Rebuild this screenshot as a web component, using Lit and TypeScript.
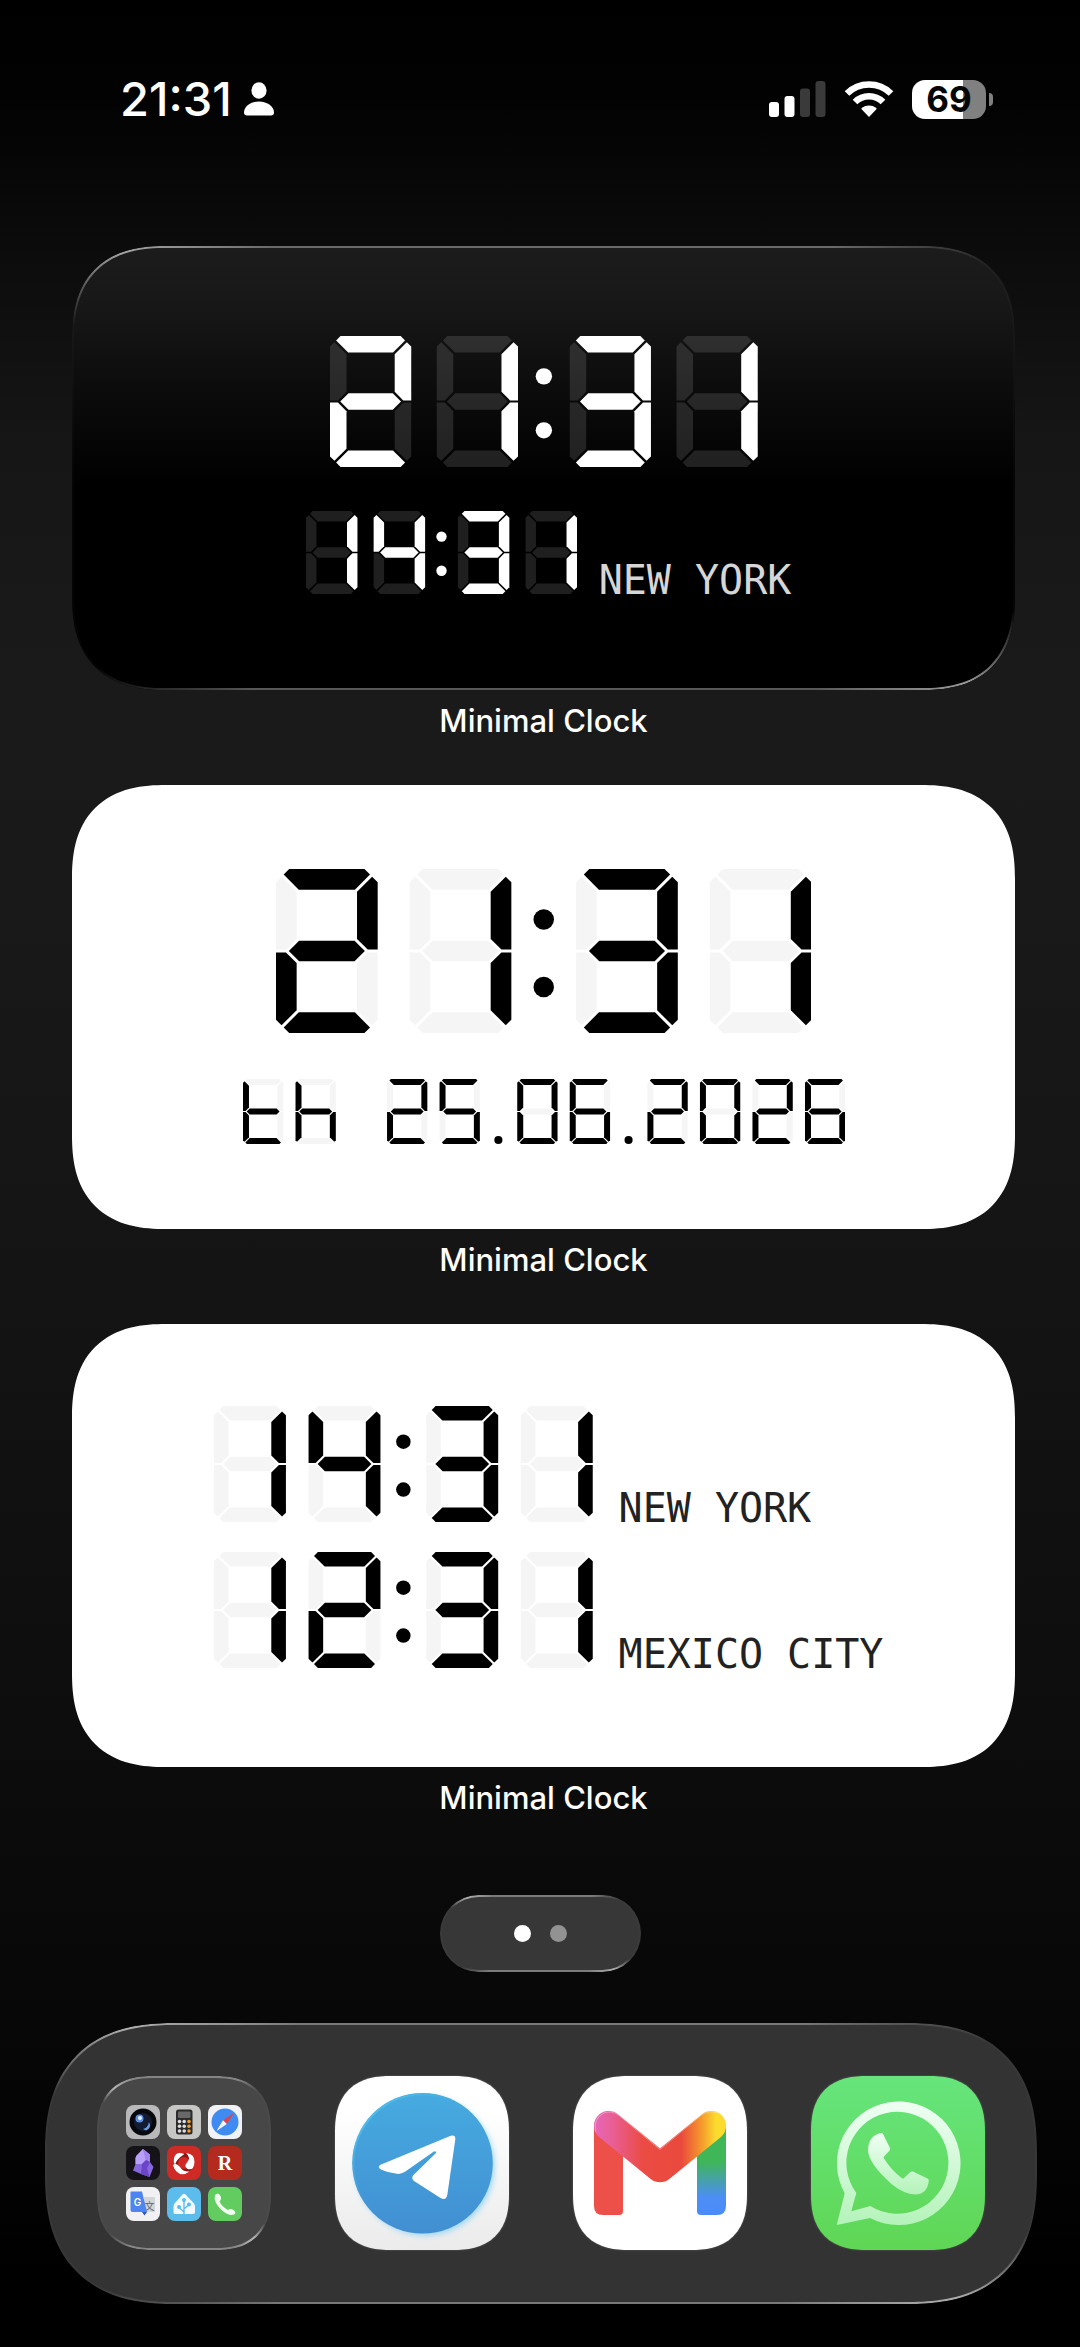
import { LitElement, html, svg, css, TemplateResult } from 'lit';
import { customElement, property } from 'lit/decorators.js';
import { classMap } from 'lit/directives/class-map.js';

// Lit segments per character, in the usual a-g naming.
const SEGMENTS: Record<string, string> = {
  '0': 'abcdef',
  '1': 'bc',
  '2': 'abdeg',
  '3': 'abcdg',
  '4': 'bcfg',
  '5': 'acdfg',
  '6': 'acdefg',
  '7': 'abc',
  '8': 'abcdefg',
  '9': 'abcdfg',
  t: 'defg',
  h: 'cefg',
};

type Point = [number, number];

@customElement('segment-display')
export class SegmentDisplay extends LitElement {
  @property()
  value: string = '';

  @property({ type: Number })
  size: number = 100;

  @property({ type: Boolean })
  thin: boolean = false;

  static styles = css`
    :host {
      display: flex;
    }
    svg {
      display: block;
    }
    .on {
      fill: var(--segment-on, #000);
    }
    .off {
      fill: var(--segment-off, #f5f5f5);
    }
  `;

  private segment_points = (w: number, h: number): Record<string, Point[]> => {
    const t = h * (this.thin ? 0.092 : 0.126);
    const c = t * 0.64;
    const a = t * 0.62;
    const e = h * 0.013;
    const g = h * 0.0085;
    const m = h / 2;
    const top: Point[] = [
      [c, 0],
      [w - c, 0],
      [w - (c + e) / 2, (c - e) / 2],
      [w - t - e, t],
      [t + e, t],
      [(c + e) / 2, (c - e) / 2],
    ];
    const left: Point[] = [
      [0, c],
      [(c - e) / 2, (c + e) / 2],
      [t, t + e],
      [t, a + m - 2 * e - t],
      [a - 2 * e + g, m - g],
      [0, m - g],
    ];
    const flip_x = (points: Point[]) => points.map(([x, y]): Point => [w - x, y]);
    const flip_y = (points: Point[]) => points.map(([x, y]): Point => [x, h - y]);
    return {
      a: top,
      b: flip_x(left),
      c: flip_y(flip_x(left)),
      d: flip_y(top),
      e: flip_y(left),
      f: left,
      g: [
        [a, m],
        [a + t / 2, m - t / 2],
        [w - a - t / 2, m - t / 2],
        [w - a, m],
        [w - a - t / 2, m + t / 2],
        [a + t / 2, m + t / 2],
      ],
    };
  };

  render() {
    const h = this.size;
    const w = h * 0.62;
    const gap = h * (this.thin ? 0.188 : 0.195);
    const radius = h * 0.0625;
    const segments = this.segment_points(w, h);
    const shapes: TemplateResult[] = [];
    let x = 0;
    for (const char of this.value) {
      if (char === ' ') {
        x += h * 0.6;
      } else if (char === ':') {
        x += h * 0.395 - gap;
        const cx = x - (h * 0.395) / 2;
        shapes.push(svg`
          <circle class="on" cx=${cx} cy=${h * 0.308} r=${radius}></circle>
          <circle class="on" cx=${cx} cy=${h * 0.72} r=${radius}></circle>
        `);
      } else if (char === '.') {
        x += h * 0.575 - gap;
        shapes.push(svg`
          <circle class="on" cx=${x - h * 0.29} cy=${h - radius} r=${radius}></circle>
        `);
      } else {
        const lit = SEGMENTS[char] ?? '';
        const offset = x;
        for (const [name, points] of Object.entries(segments)) {
          shapes.push(svg`
            <polygon
              class=${lit.includes(name) ? 'on' : 'off'}
              points=${points.map(([px, py]) => `${(px + offset).toFixed(2)},${py.toFixed(2)}`).join(' ')}
            ></polygon>
          `);
        }
        x += w + gap;
      }
    }
    const width = Math.round(x - gap);
    return html`
      <svg
        role="img"
        aria-label=${this.value}
        width=${width}
        height=${h}
        viewBox="0 0 ${width} ${h}"
      >
        ${shapes}
      </svg>
    `;
  }
}

@customElement('status-bar')
export class StatusBar extends LitElement {
  @property()
  time: string = '';

  @property({ type: Number })
  battery: number = 0;

  static styles = css`
    :host {
      display: flex;
      align-items: center;
      justify-content: space-between;
      padding: 75px 87px 123px 120px;
      font-family: Inter, 'Liberation Sans', sans-serif;
      color: #fff;
    }
    .group {
      display: flex;
      align-items: center;
      height: 48px;
      gap: 18px;
    }
    .group.left {
      gap: 12px;
    }
    .time {
      font-size: 47px;
      font-weight: 500;
      line-height: 48px;
    }
    svg {
      display: block;
    }
    .battery {
      position: relative;
      width: 74px;
      height: 39px;
      margin-right: 7px;
      border-radius: 13px;
      color: #050505;
      font-size: 35px;
      font-weight: 700;
      line-height: 39px;
      text-align: center;
    }
    .battery::after {
      content: '';
      position: absolute;
      top: 13px;
      right: -7px;
      width: 4px;
      height: 13px;
      border-radius: 0 4px 4px 0;
      background: #808080;
    }
  `;

  render() {
    return html`
      <div class="group left">
        <span class="time">${this.time}</span>
        <svg width="30" height="34" viewBox="0 0 30 34" fill="#fff" aria-hidden="true">
          <ellipse cx="15" cy="8.5" rx="7.6" ry="8.3"></ellipse>
          <path d="M3 33.5C1 33.5 0 32.300 0 30.500C0 24.500 6.500 19.500 15 19.500S30 24.500 30 30.500C30 32.300 29 33.500 27 33.500Z"></path>
        </svg>
      </div>
      <div class="group">
        <svg width="57" height="36" viewBox="0 0 57 36" aria-hidden="true">
          <rect x="0" y="21" width="10" height="15" rx="3" fill="#fff"></rect>
          <rect x="15.500" y="15" width="10" height="21" rx="3" fill="#fff"></rect>
          <rect x="31" y="7.500" width="10" height="28.500" rx="3" fill="#3a3a3a"></rect>
          <rect x="46.500" y="0" width="10" height="36" rx="3" fill="#3a3a3a"></rect>
        </svg>
        <svg width="50" height="36" viewBox="0 0 50 36" aria-hidden="true">
          <g fill="none" stroke="#fff" stroke-width="6.600">
            <path d="M3 12.500A31.500 31.500 0 0 1 47 12.500"></path>
            <path d="M11 21A20 20 0 0 1 39 21"></path>
          </g>
          <path fill="#fff" d="M25 36L17.600 28.300Q17 27.500 18 26.800A11.500 11.500 0 0 1 32 26.800Q33 27.500 32.400 28.300Z"></path>
        </svg>
        <div
          class="battery"
          style="background: linear-gradient(90deg, #fff ${this.battery}%, #808080 ${this.battery}%)"
        >
          ${this.battery}
        </div>
      </div>
    `;
  }
}

const telegram_icon = svg`
  <defs>
    <linearGradient id="plate" x1="0" y1="0" x2="0" y2="1">
      <stop offset=".2" stop-color="#fff"></stop>
      <stop offset="1" stop-color="#ebebeb"></stop>
    </linearGradient>
    <linearGradient id="sky" x1="0" y1="0" x2="0" y2="1">
      <stop offset="0" stop-color="#46abe0"></stop>
      <stop offset="1" stop-color="#428fd2"></stop>
    </linearGradient>
    <linearGradient id="sky-rim" x1="0" y1="0" x2="1" y2="1">
      <stop offset="0" stop-color="#55d4fa"></stop>
      <stop offset=".45" stop-color="#46abe0" stop-opacity="0"></stop>
    </linearGradient>
    <filter id="glow" x="-20%" y="-20%" width="140%" height="140%">
      <feGaussianBlur stdDeviation="3"></feGaussianBlur>
    </filter>
  </defs>
  <rect width="174" height="174" fill="url(#plate)"></rect>
  <circle cx="90" cy="90" r="69" fill="#8fd3f5" filter="url(#glow)"></circle>
  <circle cx="87.500" cy="87.300" r="70.300" fill="url(#sky)"></circle>
  <circle cx="87.500" cy="87.300" r="69" fill="none" stroke="url(#sky-rim)" stroke-width="1.800"></circle>
  <path
    fill="#fff"
    d="M45.500 88.700L115.800 59.700Q120.800 58.300 120.300 63.500L112.300 119Q111 125 105.500 122L79 105Q76 102.500 78.200 99.300L101 77Q101.500 74.500 98.500 75.800L70 95.800Q66 98.300 62 97.800Q53 97 46.500 93.800Q41.500 91 45.500 88.700Z"
  ></path>
`;

const gmail_icon = svg`
  <defs>
    <linearGradient id="green" x1="0" y1="0" x2="0" y2="1">
      <stop offset=".4" stop-color="#3fb658"></stop>
      <stop offset=".8" stop-color="#4c8ef5"></stop>
      <stop offset="1" stop-color="#4b8bfa"></stop>
    </linearGradient>
    <linearGradient id="fold" gradientUnits="userSpaceOnUse" x1="24" y1="0" x2="152" y2="0">
      <stop offset="0" stop-color="#e765b4"></stop>
      <stop offset=".12" stop-color="#e95f95"></stop>
      <stop offset=".36" stop-color="#ea4b43"></stop>
      <stop offset=".66" stop-color="#ea4a3d"></stop>
      <stop offset=".82" stop-color="#f59b2c"></stop>
      <stop offset=".93" stop-color="#fadb2e"></stop>
    </linearGradient>
  </defs>
  <rect width="174" height="174" fill="#fff"></rect>
  <path fill="#ec5048" d="M21 50H50V135Q50 139 46 139H30Q21 139 21 130Z"></path>
  <path fill="url(#green)" d="M124 50H153V130Q153 139 144 139H128Q124 139 124 135Z"></path>
  <path
    fill="none"
    stroke="url(#fold)"
    stroke-width="29.500"
    stroke-linecap="round"
    stroke-linejoin="round"
    d="M35.700 49.700L87 91.500L138.300 49.700"
  ></path>
  <path fill="none" stroke="#fff" stroke-opacity=".35" d="M22.500 56Q20 42 31 37Q39 34 46 39.500L87 73.500L128 39.500Q136 33.500 144 37"></path>
`;

const whatsapp_icon = svg`
  <defs>
    <linearGradient id="leaf" x1="0" y1="0" x2="0" y2="1">
      <stop offset="0" stop-color="#66e57c"></stop>
      <stop offset="1" stop-color="#5fd655"></stop>
    </linearGradient>
    <linearGradient id="mint" x1="0" y1="0" x2="0" y2="1">
      <stop offset="0" stop-color="#f0fff4"></stop>
      <stop offset="1" stop-color="#b4f3ba"></stop>
    </linearGradient>
  </defs>
  <rect width="174" height="174" fill="url(#leaf)"></rect>
  <path
    fill="url(#mint)"
    fill-rule="evenodd"
    d="M25.700 149L33.700 117.300A61.800 61.800 0 1 1 59 142ZM40.300 135.300L59.300 130A51 51 0 1 0 45.300 117Z"
  ></path>
  <path
    fill="url(#mint)"
    d="M70 57Q71.300 56.500 72 58L79 72Q79.600 73.400 78.600 74.500L73 80.500Q72.300 81.400 73 82.500Q80 94 91 102.200Q92 103 93 102L99.300 96Q100.400 95 102 95.600L116.500 102.500Q118.200 103.500 117.800 105Q116 118.500 104 118.500Q93 118 81 108.500Q57 87 57 74Q57.500 59.500 70 57Z"
  ></path>
`;

const mini_icons = [
  {
    name: 'Camera',
    color: '#b9b9bb',
    art: svg`
      <circle cx="17" cy="17" r="13.500" fill="#08090d"></circle>
      <circle cx="17" cy="17" r="9" fill="#131c33"></circle>
      <circle cx="13.500" cy="13.500" r="4" fill="#5d8ee0"></circle>
      <circle cx="14" cy="13" r="2" fill="#eaf2ff"></circle>
      <path d="M17 24Q22 23 23 17Q26 23 20 25.500Z" fill="#6a9fe8"></path>
    `,
  },
  {
    name: 'Calculator',
    color: '#c6c6c4',
    art: svg`
      <rect x="9" y="4.500" width="16.500" height="25" rx="2.500" fill="#2b2b2b"></rect>
      <rect x="11" y="6.500" width="12.500" height="6.500" rx="1" fill="#686868"></rect>
      ${[16.5, 21.3, 26].map(
        (y) => svg`
          <circle cx="12.500" cy=${y} r="1.800" fill="#ddd"></circle>
          <circle cx="17.200" cy=${y} r="1.800" fill="#ddd"></circle>
          <circle cx="22" cy=${y} r="1.800" fill="#f39a2b"></circle>
        `
      )}
    `,
  },
  {
    name: 'Safari',
    color: '#f1f2f6',
    art: svg`
      <circle cx="17" cy="17" r="13.500" fill="#3f8bf2"></circle>
      <path d="M26 8L18.800 19L15 15.200Z" fill="#e0434a"></path>
      <path d="M8.500 26L18.800 19L15 15.200Z" fill="#f4f6fa"></path>
    `,
  },
  {
    name: 'Obsidian',
    color: '#151318',
    art: svg`
      <path d="M17 3L24 8.500L24 16L27.500 21L23.500 31L15 28L7 24.500L9.500 18L9 12Z" fill="#8667dd"></path>
      <path d="M17 3L20 14L16 18L9.500 18L10 10Z" fill="#b9a0f8"></path>
      <path d="M17 3L24 8.500L24 16L20 14Z" fill="#9f83ee"></path>
      <path d="M16 18L20 14L24 16L21 22L23.500 31L15 28Z" fill="#6a45c8"></path>
    `,
  },
  {
    name: 'Recorder',
    color: '#cf2a25',
    art: svg`
      <circle cx="17" cy="17" r="8" fill="none" stroke="#8f1414" stroke-width="4"></circle>
      <path d="M17.500 8Q9 4.500 7 12Q6 16 8 19Q9 13.500 17.500 8Z" fill="#fff"></path>
      <path d="M19 7Q28 8 27.500 16Q27 25 20.500 23Q16.500 20 20 16.500Q24.500 12 19 7Z" fill="#fff"></path>
      <path d="M6 19Q9.500 16.500 13 21Q16 26 22.500 25.500Q15 31 9.500 25.500Q7 23 6 19Z" fill="#fff"></path>
    `,
  },
  {
    name: 'Reader',
    color: '#b32a1e',
    art: svg`
      <text class="serif" x="17" y="23.500" font-size="20" text-anchor="middle" fill="#fff">R</text>
    `,
  },
  {
    name: 'Translate',
    color: '#f1f1f3',
    art: svg`
      <path d="M18 10H28Q29 10 29 11V24Q29 25 28 25H18Z" fill="#d3d5d8"></path>
      <text class="cjk" x="23.500" y="23" font-size="10" text-anchor="middle" fill="#5c6470">文</text>
      <path d="M5 4.500H16L21 25H6.500Q4.500 25 4.500 23V5Z" fill="#4d84ee"></path>
      <path d="M16 25H21L18.500 28.500Z" fill="#2f57b8"></path>
      <text class="sans" x="11.500" y="18.500" font-size="10" text-anchor="middle" fill="#fff">G</text>
    `,
  },
  {
    name: 'Home',
    color: '#5cbdec',
    art: svg`
      <path d="M15.500 7.500Q17 6.200 18.500 7.500L27 16.500Q28 18 28 20V25Q28 27 26 27H8Q6.500 27 6.500 25V20Q6.500 18 7.500 16.500Z" fill="#f2fbff"></path>
      <g stroke="#5cbdec" stroke-width="1.400" fill="none">
        <path d="M17 27V13M17 25L12 20.500M17 22L22 17.500"></path>
      </g>
      <g fill="#5cbdec">
        <circle cx="17" cy="13" r="2"></circle>
        <circle cx="12" cy="20" r="2"></circle>
        <circle cx="22" cy="17.500" r="2"></circle>
      </g>
    `,
  },
  {
    name: 'Phone',
    color: '#62cc60',
    art: svg`
      <path d="M7 8Q10.500 4.500 12.500 9Q14 12 11.500 14.500Q14 20 20 23Q22.500 21 25.500 23Q29 26 26 27.500Q21 29.500 13.500 23Q5 15 7 8Z" fill="#f1fff0"></path>
    `,
  },
];

interface ClockRow {
  value: string;
  size: number;
  label?: string;
  thin?: boolean;
}

interface ClockWidget {
  style: string;
  rows: ClockRow[];
}

const widgets: ClockWidget[] = [
  {
    style: 'dark',
    rows: [
      { value: '21:31', size: 131 },
      { value: '14:31', size: 83, label: 'NEW YORK' },
    ],
  },
  {
    style: 'date',
    rows: [
      { value: '21:31', size: 164 },
      { value: 'th 25.06.2026', size: 65, thin: true },
    ],
  },
  {
    style: 'zones',
    rows: [
      { value: '14:31', size: 116, label: 'NEW YORK' },
      { value: '12:31', size: 116, label: 'MEXICO CITY' },
    ],
  },
];

const apps = [
  { name: 'Telegram', art: telegram_icon },
  { name: 'Gmail', art: gmail_icon },
  { name: 'WhatsApp', art: whatsapp_icon },
];

@customElement('app-root')
export class AppRoot extends LitElement {
  static styles = css`
    * {
      box-sizing: border-box;
    }
    :host {
      display: flex;
      flex-direction: column;
      min-height: 100vh;
      padding-bottom: 42px;
      box-sizing: border-box;
      color: #fff;
      font-family: Inter, 'Liberation Sans', sans-serif;
      background: linear-gradient(
        #000 0%,
        #020202 4%,
        #0c0c0c 11%,
        #161616 19%,
        #1a1a1a 29%,
        #191919 38%,
        #141414 55%,
        #0c0c0c 76%,
        #060606 88%,
        #000 97%
      );
    }
    button {
      padding: 0;
      border: 0;
      background: none;
      font: inherit;
      color: inherit;
    }
    main {
      display: flex;
      flex-direction: column;
      gap: 46px;
      padding: 0 65px 0 72px;
    }
    figure {
      margin: 0;
    }
    figcaption {
      margin-top: 13px;
      font-size: 31px;
      font-weight: 500;
      line-height: 36px;
      text-align: center;
    }
    .widget {
      display: grid;
      align-content: center;
      justify-content: center;
      justify-items: center;
      aspect-ratio: 17 / 8;
      border-radius: 80px;
      background: #fff;
      color: #222;
    }
    .row {
      display: flex;
      align-items: baseline;
      gap: 26px;
    }
    .row.labelled {
      padding-left: 10px;
    }
    .label {
      font-family: 'DejaVu Sans Mono', monospace;
      font-size: 40px;
      line-height: 48px;
    }
    .dark {
      gap: 44px;
      padding-top: 4px;
      background: linear-gradient(#1c1c1c, #181818 12%, #0c0c0c 32%, #000 54%);
      color: #d6d6d6;
      --segment-on: #fff;
      --segment-off: rgba(255, 255, 255, 0.12);
      --corner: 65deg;
    }
    .dark .row {
      gap: 22px;
    }
    .date {
      gap: 46px;
    }
    .zones {
      gap: 20px;
      padding-bottom: 6px;
      justify-items: start;
    }

    /* Thin light edge, brightest in the top left and bottom right corners. */
    .glass {
      position: relative;
    }
    .glass::before {
      content: '';
      position: absolute;
      inset: 0;
      padding: 2px;
      border-radius: inherit;
      pointer-events: none;
      background: conic-gradient(
        rgba(255, 255, 255, 0.34) 0deg calc(var(--corner) - 12deg),
        rgba(255, 255, 255, 0.02) calc(var(--corner) + 1deg) calc(172deg - var(--corner)),
        rgba(255, 255, 255, 0.6) calc(182deg - var(--corner)),
        rgba(255, 255, 255, 0.34) calc(194deg - var(--corner)) calc(168deg + var(--corner)),
        rgba(255, 255, 255, 0.02) calc(181deg + var(--corner)) calc(352deg - var(--corner)),
        rgba(255, 255, 255, 0.6) calc(362deg - var(--corner)),
        rgba(255, 255, 255, 0.34) calc(374deg - var(--corner)) 360deg
      );
      mask:
        linear-gradient(#000 0 0) content-box exclude,
        linear-gradient(#000 0 0);
    }

    .pages {
      display: flex;
      align-self: center;
      align-items: center;
      gap: 19px;
      margin: 79px 0 51px;
      padding: 30px 74px;
      border-radius: 39px;
      background: #373737;
      --corner: 66deg;
    }
    .page {
      width: 17px;
      height: 17px;
      border-radius: 50%;
      background: #929292;
    }
    .page.current {
      background: #fff;
    }

    .dock {
      display: flex;
      justify-content: space-between;
      margin: 0 43px 0 45px;
      padding: 53px 52px 54px;
      border-radius: 112px;
      background: #333;
      --corner: 74deg;
    }
    .app {
      width: 174px;
      height: 174px;
      border-radius: 47px;
      overflow: hidden;
      box-shadow: 0 0 2px rgba(255, 255, 255, 0.25);
    }
    .app svg,
    .mini svg {
      display: block;
    }
    .folder {
      display: grid;
      grid-template-columns: repeat(3, 34px);
      place-content: center;
      gap: 7px;
      width: 174px;
      height: 174px;
      border-radius: 47px;
      background: #474747;
      --corner: 45deg;
    }
    .mini {
      border-radius: 8px;
      overflow: hidden;
    }

    @supports (corner-shape: superellipse(1.3)) {
      .widget,
      .widget::before,
      .dock,
      .dock::before,
      .folder,
      .folder::before,
      .app {
        corner-shape: superellipse(1.3);
      }
      .widget {
        border-radius: 94px;
      }
      .dock {
        border-radius: 130px;
      }
      .app,
      .folder {
        border-radius: 56px;
      }
    }

    .serif {
      font-family: 'Liberation Serif', serif;
      font-weight: 700;
    }
    .sans {
      font-family: Inter, sans-serif;
      font-weight: 600;
    }
    .cjk {
      font-family: 'Noto Sans CJK SC', sans-serif;
    }
  `;

  private render_row = (row: ClockRow) => html`
    <div class="row ${classMap({ labelled: !!row.label })}">
      <segment-display
        .value=${row.value}
        .size=${row.size}
        .thin=${row.thin ?? false}
      ></segment-display>
      ${row.label ? html`<span class="label">${row.label}</span>` : ''}
    </div>
  `;

  private render_widget = (widget: ClockWidget) => html`
    <figure>
      <div class="widget ${classMap({ [widget.style]: true, glass: widget.style === 'dark' })}">
        ${widget.rows.map(this.render_row)}
      </div>
      <figcaption>Minimal Clock</figcaption>
    </figure>
  `;

  render() {
    return html`
      <status-bar time="21:31" battery="69"></status-bar>
      <main>${widgets.map(this.render_widget)}</main>
      <nav class="pages glass" aria-label="Pages">
        <button class="page current" aria-label="Page 1"></button>
        <button class="page" aria-label="Page 2"></button>
      </nav>
      <footer class="dock glass">
        <button class="folder glass" aria-label="Folder">
          ${mini_icons.map(
            (icon) => html`
              <span class="mini">
                <svg width="34" height="34" viewBox="0 0 34 34" role="img" aria-label=${icon.name}>
                  <rect width="34" height="34" fill=${icon.color}></rect>
                  ${icon.art}
                </svg>
              </span>
            `
          )}
        </button>
        ${apps.map(
          (app) => html`
            <button class="app" aria-label=${app.name}>
              <svg width="174" height="174" viewBox="0 0 174 174" aria-hidden="true">${app.art}</svg>
            </button>
          `
        )}
      </footer>
    `;
  }
}
